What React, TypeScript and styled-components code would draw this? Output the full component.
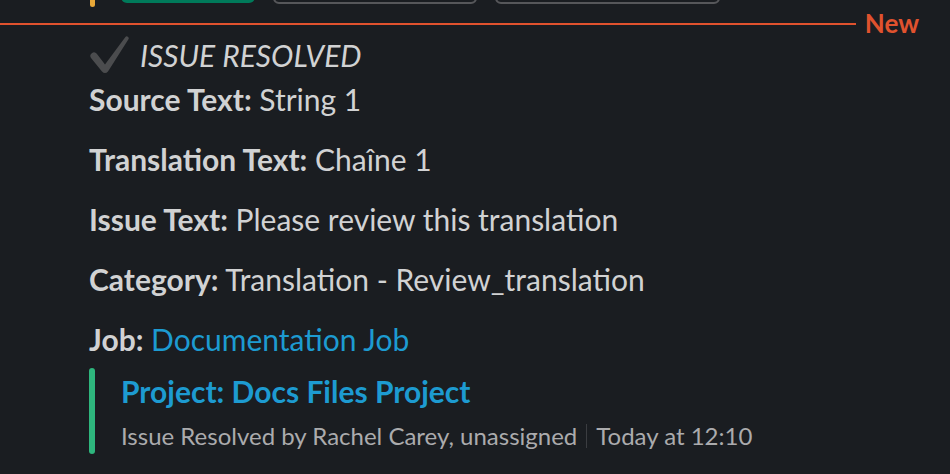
import React from 'react';
import styled, { createGlobalStyle } from 'styled-components';

const GlobalStyle = createGlobalStyle`
  html, body {
    margin: 0;
    padding: 0;
    background: #1a1d21;
  }
  body {
    font-family: Lato, "Noto Sans", "Liberation Sans", sans-serif;
    color: #d1d2d3;
  }
`;

const Page = styled.div`
  width: 950px;
  height: 474px;
  overflow: hidden;
  background: #1a1d21;
`;

const ActionStrip = styled.div`
  height: 8px;
  overflow: hidden;
  display: flex;
  align-items: flex-end;
  padding-left: 90px;
`;

const Accent = styled.div`
  width: 5px;
  height: 20px;
  border-radius: 3px;
  background: #e8a838;
  margin-right: 26px;
  margin-bottom: 1px;
`;

const ActionButton = styled.div<{ $primary?: boolean; $width: number }>`
  width: ${(p) => p.$width}px;
  height: 30px;
  box-sizing: border-box;
  border-radius: 6px;
  margin-right: 18px;
  margin-bottom: ${(p) => (p.$primary ? 5 : 4)}px;
  background: ${(p) => (p.$primary ? '#007a5a' : 'transparent')};
  border: ${(p) => (p.$primary ? 'none' : '2px solid #56575a')};
`;

const Divider = styled.div`
  display: flex;
  align-items: center;
  height: 28px;
  margin-top: 2px;
`;

const DividerLine = styled.div`
  flex: 1;
  height: 2px;
  background: #e0522e;
`;

const NewLabel = styled.span`
  color: #e0522e;
  font-size: 26px;
  font-weight: 700;
  line-height: 28px;
  margin: -2px 31px 0 9px;
`;

const Body = styled.div`
  padding-left: 89px;
`;

const StatusRow = styled.div`
  display: flex;
  align-items: center;
  height: 38px;
  margin-top: -2px;
  margin-bottom: 3px;
`;

const StatusText = styled.span`
  font-style: italic;
  font-size: 30px;
  color: #d1d2d3;
  margin-left: 10px;
`;

const Field = styled.div`
  font-size: 30px;
  line-height: 44px;
  margin-bottom: 16px;
  color: #d1d2d3;
`;

const Label = styled.b`
  font-weight: 700;
`;

const Link = styled.span`
  color: #1d9bd1;
`;

const Attachment = styled.div`
  display: flex;
  margin-top: -9px;
`;

const AttachmentBar = styled.div`
  width: 6px;
  border-radius: 4px;
  background: #2eb67d;
`;

const AttachmentContent = styled.div`
  padding: 1px 0 2px 26px;
`;

const AttachmentTitle = styled.div`
  color: #1d9bd1;
  font-size: 30px;
  font-weight: 700;
  line-height: 44px;
`;

const Footer = styled.div`
  display: flex;
  align-items: center;
  font-size: 24px;
  color: #ababad;
  margin-top: 7px;
  line-height: 32px;
`;

const Sep = styled.span`
  width: 1px;
  height: 24px;
  background: #3b3d41;
  margin: 0 9px;
`;

// heavy check mark, thick short arm tapering into the long one
const CheckIcon = () => (
  <svg width="41" height="38" viewBox="0 0 41 38">
    <path
      d="M7.8 17.8 L16 28.5 L36.4 0.9 A2 2 0 0 1 39.6 3.1 L19 35.4 Q16 38.6 13 35.4 L2.2 22.2 A3.5 3.5 0 0 1 7.8 17.8 Z"
      fill="#4b4c4e"
    />
  </svg>
);

const App: React.FC = () => (
  <Page>
    <GlobalStyle />
    <ActionStrip>
      <Accent />
      <ActionButton $primary $width={134} />
      <ActionButton $width={204} />
      <ActionButton $width={225} />
    </ActionStrip>
    <Divider>
      <DividerLine />
      <NewLabel>New</NewLabel>
    </Divider>
    <Body>
      <StatusRow>
        <CheckIcon />
        <StatusText>ISSUE RESOLVED</StatusText>
      </StatusRow>
      <Field>
        <Label>Source Text:</Label> String 1
      </Field>
      <Field>
        <Label>Translation Text:</Label> Chaîne 1
      </Field>
      <Field>
        <Label>Issue Text:</Label> Please review this translation
      </Field>
      <Field>
        <Label>Category:</Label> Translation - Review_translation
      </Field>
      <Field>
        <Label>Job:</Label> <Link>Documentation Job</Link>
      </Field>
      <Attachment>
        <AttachmentBar />
        <AttachmentContent>
          <AttachmentTitle>Project: Docs Files Project</AttachmentTitle>
          <Footer>
            Issue Resolved by Rachel Carey, unassigned
            <Sep />
            Today at 12:10
          </Footer>
        </AttachmentContent>
      </Attachment>
    </Body>
  </Page>
);

export default App;
